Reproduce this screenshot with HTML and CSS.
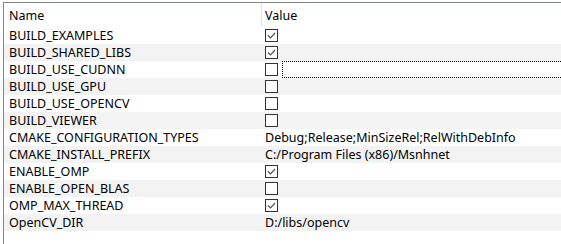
FILE: index.html
```html
<!DOCTYPE html>
<html lang="en">
<head>
    <meta charset="UTF-8">
    <title>CMake Cache</title>
    <link rel="stylesheet" href="styles.css">
</head>
<body>
    <div class="tree">
        <div class="header">
            <div class="col-name">Name</div>
            <div class="col-value">Value</div>
        </div>
        <div class="row">
            <div class="col-name">BUILD_EXAMPLES</div>
            <div class="col-value"><span class="check on"><svg viewBox="0 0 11 11"><polyline points="2,5.5 4.5,8 9,3"/></svg></span></div>
        </div>
        <div class="row">
            <div class="col-name">BUILD_SHARED_LIBS</div>
            <div class="col-value"><span class="check on"><svg viewBox="0 0 11 11"><polyline points="2,5.5 4.5,8 9,3"/></svg></span></div>
        </div>
        <div class="row">
            <div class="col-name">BUILD_USE_CUDNN</div>
            <div class="col-value"><span class="check"></span><span class="focus"></span></div>
        </div>
        <div class="row">
            <div class="col-name">BUILD_USE_GPU</div>
            <div class="col-value"><span class="check"></span></div>
        </div>
        <div class="row">
            <div class="col-name">BUILD_USE_OPENCV</div>
            <div class="col-value"><span class="check"></span></div>
        </div>
        <div class="row">
            <div class="col-name">BUILD_VIEWER</div>
            <div class="col-value"><span class="check"></span></div>
        </div>
        <div class="row">
            <div class="col-name">CMAKE_CONFIGURATION_TYPES</div>
            <div class="col-value">Debug;Release;MinSizeRel;RelWithDebInfo</div>
        </div>
        <div class="row">
            <div class="col-name">CMAKE_INSTALL_PREFIX</div>
            <div class="col-value">C:/Program Files (x86)/Msnhnet</div>
        </div>
        <div class="row">
            <div class="col-name">ENABLE_OMP</div>
            <div class="col-value"><span class="check on"><svg viewBox="0 0 11 11"><polyline points="2,5.5 4.5,8 9,3"/></svg></span></div>
        </div>
        <div class="row">
            <div class="col-name">ENABLE_OPEN_BLAS</div>
            <div class="col-value"><span class="check"></span></div>
        </div>
        <div class="row">
            <div class="col-name">OMP_MAX_THREAD</div>
            <div class="col-value"><span class="check on"><svg viewBox="0 0 11 11"><polyline points="2,5.5 4.5,8 9,3"/></svg></span></div>
        </div>
        <div class="row">
            <div class="col-name">OpenCV_DIR</div>
            <div class="col-value">D:/libs/opencv</div>
        </div>
    </div>
</body>
</html>
```

FILE: styles.css
```css
body {
    margin: 0;
    padding: 0;
    background: #ffffff;
    font-family: "Noto Sans", "Liberation Sans", sans-serif;
    font-size: 12.5px;
    color: #000000;
}

.tree {
    margin: 2px 0 0 3px;
    height: 242px;
    border-top: 1px solid #828790;
    border-left: 1px solid #828790;
    overflow: hidden;
}

.header, .row {
    display: grid;
    grid-template-columns: 258px 1fr;
}

.header {
    height: 24px;
    align-items: center;
}

.header .col-name {
    padding-left: 5px;
    border-right: 1px solid #e5e5e5;
    align-self: stretch;
    display: flex;
    align-items: center;
}

.header .col-value {
    padding-left: 3px;
}

.row {
    height: 17px;
    line-height: 17px;
    white-space: nowrap;
}

.row:nth-child(odd) {
    background: #f3f3f3;
}

.row .col-name {
    padding-left: 5px;
}

.row .col-value {
    padding-left: 3px;
    display: flex;
    align-items: center;
}

.check {
    display: block;
    width: 11px;
    height: 11px;
    border: 1px solid #333333;
    background: #ffffff;
}

.check svg {
    display: block;
    width: 11px;
    height: 11px;
    fill: none;
    stroke: #555555;
    stroke-width: 1.2;
}

.focus {
    flex: 1;
    height: 15px;
    margin-left: 4px;
    border: 1px dotted #000000;
    border-right: none;
}
```
